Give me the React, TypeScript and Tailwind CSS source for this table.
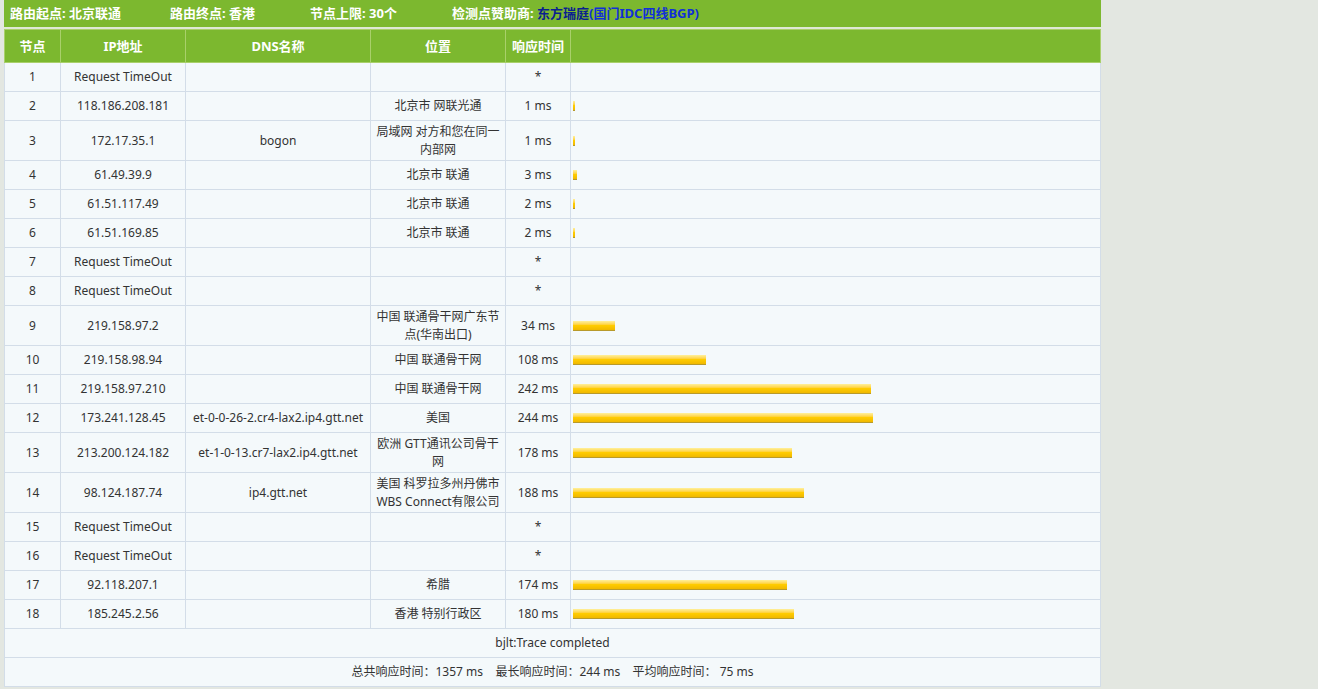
import React from "react";

type Row = { n: number; ip: string; dns: string; loc: string; t: string; ms: number };

const rows: Row[] = [
  { n: 1, ip: "Request TimeOut", dns: "", loc: "", t: "*", ms: 0 },
  { n: 2, ip: "118.186.208.181", dns: "", loc: "北京市 网联光通", t: "1 ms", ms: 1 },
  { n: 3, ip: "172.17.35.1", dns: "bogon", loc: "局域网 对方和您在同一内部网", t: "1 ms", ms: 1 },
  { n: 4, ip: "61.49.39.9", dns: "", loc: "北京市 联通", t: "3 ms", ms: 3 },
  { n: 5, ip: "61.51.117.49", dns: "", loc: "北京市 联通", t: "2 ms", ms: 2 },
  { n: 6, ip: "61.51.169.85", dns: "", loc: "北京市 联通", t: "2 ms", ms: 2 },
  { n: 7, ip: "Request TimeOut", dns: "", loc: "", t: "*", ms: 0 },
  { n: 8, ip: "Request TimeOut", dns: "", loc: "", t: "*", ms: 0 },
  { n: 9, ip: "219.158.97.2", dns: "", loc: "中国 联通骨干网广东节点(华南出口)", t: "34 ms", ms: 34 },
  { n: 10, ip: "219.158.98.94", dns: "", loc: "中国 联通骨干网", t: "108 ms", ms: 108 },
  { n: 11, ip: "219.158.97.210", dns: "", loc: "中国 联通骨干网", t: "242 ms", ms: 242 },
  { n: 12, ip: "173.241.128.45", dns: "et-0-0-26-2.cr4-lax2.ip4.gtt.net", loc: "美国", t: "244 ms", ms: 244 },
  { n: 13, ip: "213.200.124.182", dns: "et-1-0-13.cr7-lax2.ip4.gtt.net", loc: "欧洲 GTT通讯公司骨干网", t: "178 ms", ms: 178 },
  { n: 14, ip: "98.124.187.74", dns: "ip4.gtt.net", loc: "美国 科罗拉多州丹佛市WBS Connect有限公司", t: "188 ms", ms: 188 },
  { n: 15, ip: "Request TimeOut", dns: "", loc: "", t: "*", ms: 0 },
  { n: 16, ip: "Request TimeOut", dns: "", loc: "", t: "*", ms: 0 },
  { n: 17, ip: "92.118.207.1", dns: "", loc: "希腊", t: "174 ms", ms: 174 },
  { n: 18, ip: "185.245.2.56", dns: "", loc: "香港 特别行政区", t: "180 ms", ms: 180 },
];

const td = "border border-[#d3dde8] text-center align-middle h-[29px] py-[1.5px] px-[4px]";
const th = "border border-[#a9d06a] text-center align-middle text-white font-bold text-[13px]";

export default function App() {
  return (
    <div
      className="min-h-[689px] bg-[#e3e7e1] pl-[4px] text-[12px] text-[#333]"
      style={{ fontFamily: '"Noto Sans", "Noto Sans CJK SC", sans-serif' }}
    >
      <div className="w-[1097px]">
        <div className="h-[27px] bg-[#7cb82f] flex items-center text-white font-bold text-[13px] pl-[6px]">
          <span className="w-[160px]">路由起点: 北京联通</span>
          <span className="w-[140px]">路由终点: 香港</span>
          <span className="w-[142px]">节点上限: 30个</span>
          <span>
            检测点赞助商: <span className="text-[#0a1f8f]">东方瑞庭</span>
            <span className="text-[#1030d8]">(国门IDC四线BGP)</span>
          </span>
        </div>
        <div className="h-[2px] bg-[#dfe9d6]" />
        <table className="w-full table-fixed border-collapse bg-[#f4f9fb] leading-[18px]">
          <colgroup>
            <col className="w-[56px]" />
            <col className="w-[125px]" />
            <col className="w-[185px]" />
            <col className="w-[135px]" />
            <col className="w-[65px]" />
            <col />
          </colgroup>
          <thead>
            <tr className="bg-[#7cb82f] h-[33px]">
              <th className={th}>节点</th>
              <th className={th}>IP地址</th>
              <th className={th}>DNS名称</th>
              <th className={th}>位置</th>
              <th className={th}>响应时间</th>
              <th className={th}></th>
            </tr>
          </thead>
          <tbody>
            {rows.map((r) => (
              <tr key={r.n}>
                <td className={td}>{r.n}</td>
                <td className={td}>{r.ip}</td>
                <td className={td + " whitespace-nowrap"}>{r.dns}</td>
                <td className={td}>{r.loc}</td>
                <td className={td}>{r.t}</td>
                <td className={"border border-[#d3dde8] align-middle pl-[2px]"}>
                  {r.ms > 0 && (
                    <div
                      className="h-[10px] bg-gradient-to-b from-[#fff09a] via-[#ffcc00] to-[#f0b800] border-b border-[#b89a2a]"
                      style={{ width: Math.max(2, Math.round(r.ms * 1.23)) }}
                    />
                  )}
                </td>
              </tr>
            ))}
            <tr>
              <td colSpan={6} className={td}>
                bjlt:Trace completed
              </td>
            </tr>
            <tr>
              <td colSpan={6} className={td}>
                总共响应时间：1357 ms&nbsp;&nbsp;&nbsp;&nbsp;最长响应时间：244 ms&nbsp;&nbsp;&nbsp;&nbsp;平均响应时间：&nbsp;75 ms
              </td>
            </tr>
          </tbody>
        </table>
      </div>
    </div>
  );
}
